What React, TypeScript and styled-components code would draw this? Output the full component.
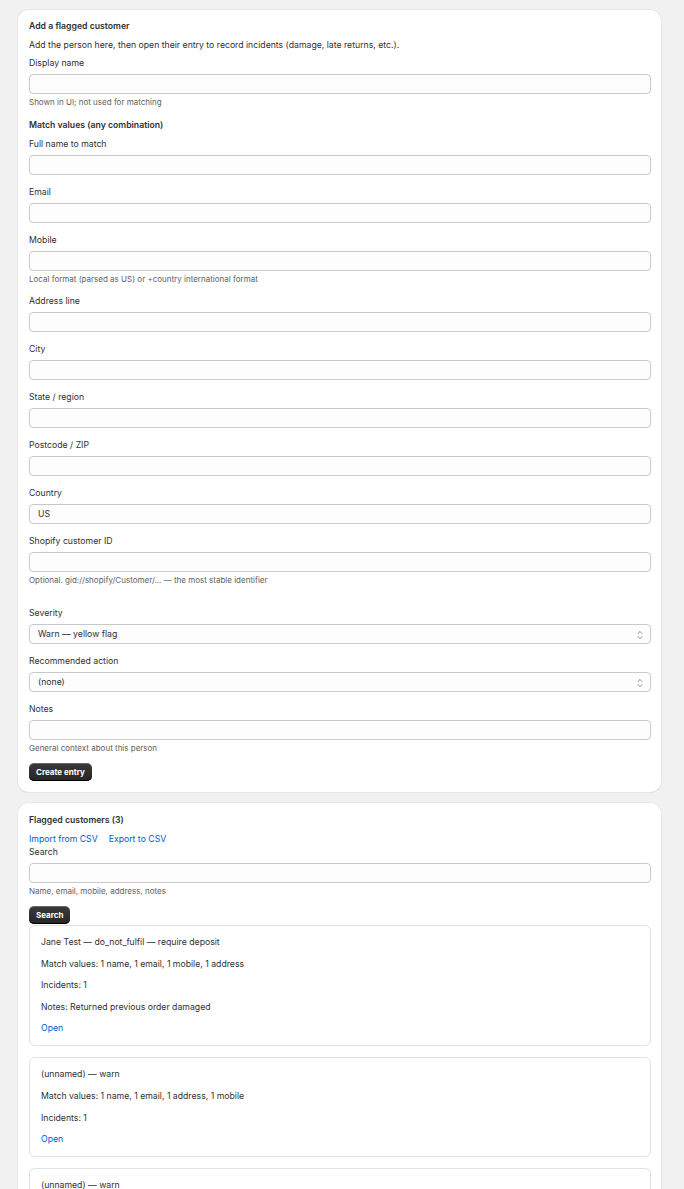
import styled, { createGlobalStyle } from 'styled-components';

const GlobalStyle = createGlobalStyle`
  html, body {
    margin: 0;
    padding: 0;
    background: #f1f1f1;
  }
  body {
    font-family: Inter, "Noto Sans", "Liberation Sans", sans-serif;
    color: #303030;
    font-size: 8.7px;
    line-height: 12px;
  }
`;

const Page = styled.div`
  display: flex;
  flex-direction: column;
  gap: 9px;
  padding: 9px 22px 0 17px;
`;

const Card = styled.section<{ $pt?: number }>`
  background: #fff;
  border-radius: 12px;
  padding: ${(p) => p.$pt ?? 11}px 11px 12px 12px;
  box-shadow: inset 0 0 0 1px #e6e6e6, inset 0 -1px 0 0 #d4d4d4;
  display: flex;
  flex-direction: column;
`;

const Title = styled.h2`
  margin: 0;
  font-size: 8.7px;
  line-height: 12px;
  font-weight: 600;
`;

const Text = styled.p<{ $mt?: number }>`
  margin: ${(p) => p.$mt ?? 0}px 0 0;
`;

const Heading = styled.h3<{ $mt?: number }>`
  margin: ${(p) => p.$mt ?? 0}px 0 0;
  font-size: 8.7px;
  line-height: 12px;
  font-weight: 600;
`;

const Field = styled.div<{ $mt?: number }>`
  display: flex;
  flex-direction: column;
  margin-top: ${(p) => p.$mt ?? 11}px;
`;

const Label = styled.label`
  line-height: 12px;
  margin-bottom: 5px;
`;

const Input = styled.div`
  height: 20px;
  box-sizing: border-box;
  border: 1px solid #c9c9c9;
  border-radius: 4px;
  background: #fdfdfd;
  display: flex;
  align-items: center;
  padding: 0 8px;
  position: relative;
`;

const Help = styled.span`
  color: #616161;
  font-size: 8px;
  line-height: 10px;
  margin-top: 3px;
`;

const Chevrons = styled.svg`
  position: absolute;
  right: 7px;
  top: 5px;
`;

const Button = styled.button<{ $mt?: number }>`
  align-self: flex-start;
  margin-top: ${(p) => p.$mt ?? 0}px;
  height: 18px;
  padding: 0 7px;
  border: none;
  border-radius: 5px;
  background: linear-gradient(#3a3a3a, #262626);
  box-shadow: inset 0 -1px 0 #000, inset 0 1px 0 rgba(255, 255, 255, 0.25);
  color: #fff;
  font-family: inherit;
  font-size: 8px;
  font-weight: 700;
  line-height: 18px;
`;

const Links = styled.div`
  display: flex;
  gap: 11px;
  margin-top: 7px;
  line-height: 12px;
`;

const Link = styled.a`
  color: #005bd3;
  text-decoration: none;
`;

const ListItem = styled.div<{ $mt?: number }>`
  margin-top: ${(p) => p.$mt ?? 11}px;
  border: 1px solid #e3e3e3;
  border-radius: 6px;
  padding: 10px 11px 11px;
  display: flex;
  flex-direction: column;
  gap: 9.6px;
`;

type FieldProps = {
  label: string;
  value?: string;
  help?: string;
  select?: boolean;
  mt?: number;
};

const SelectIcon = () => (
  <Chevrons width="6" height="10" viewBox="0 0 6 10" fill="none">
    <path d="M1 3.5 L3 1.5 L5 3.5" stroke="#8a8a8a" strokeWidth="1" strokeLinecap="round" strokeLinejoin="round" />
    <path d="M1 6.5 L3 8.5 L5 6.5" stroke="#8a8a8a" strokeWidth="1" strokeLinecap="round" strokeLinejoin="round" />
  </Chevrons>
);

const FormField = ({ label, value, help, select, mt }: FieldProps) => (
  <Field $mt={mt}>
    <Label>{label}</Label>
    <Input>
      {value}
      {select && <SelectIcon />}
    </Input>
    {help && <Help>{help}</Help>}
  </Field>
);

const entries = [
  {
    title: 'Jane Test — do_not_fulfil — require deposit',
    lines: ['Match values: 1 name, 1 email, 1 mobile, 1 address', 'Incidents: 1', 'Notes: Returned previous order damaged'],
  },
  {
    title: '(unnamed) — warn',
    lines: ['Match values: 1 name, 1 email, 1 address, 1 mobile', 'Incidents: 1'],
  },
  {
    title: '(unnamed) — warn',
    lines: ['Match values: 1 name, 1 email, 1 address', 'Incidents: 0'],
  },
];

const App = () => {
  return (
    <>
      <GlobalStyle />
      <Page>
        <Card>
          <Title>Add a flagged customer</Title>
          <Text $mt={7}>
            Add the person here, then open their entry to record incidents (damage, late returns, etc.).
          </Text>
          <FormField label="Display name" help="Shown in UI; not used for matching" mt={6} />
          <Heading $mt={12}>Match values (any combination)</Heading>
          <FormField label="Full name to match" mt={7} />
          <FormField label="Email" />
          <FormField label="Mobile" help="Local format (parsed as US) or +country international format" />
          <FormField label="Address line" />
          <FormField label="City" />
          <FormField label="State / region" />
          <FormField label="Postcode / ZIP" />
          <FormField label="Country" value="US" />
          <FormField label="Shopify customer ID" help="Optional. gid://shopify/Customer/... — the most stable identifier" />
          <FormField label="Severity" value="Warn — yellow flag" select mt={22} />
          <FormField label="Recommended action" value="(none)" select />
          <FormField label="Notes" help="General context about this person" />
          <Button $mt={10}>Create entry</Button>
        </Card>
        <Card $pt={12}>
          <Title>Flagged customers (3)</Title>
          <Links>
            <Link href="#">Import from CSV</Link>
            <Link href="#">Export to CSV</Link>
          </Links>
          <FormField label="Search" help="Name, email, mobile, address, notes" mt={1} />
          <Button $mt={10}>Search</Button>
          {entries.map((e, i) => (
            <ListItem key={i} $mt={i === 0 ? 1 : 11}>
              <Text>{e.title}</Text>
              {e.lines.map((l) => (
                <Text key={l}>{l}</Text>
              ))}
              <Link href="#">Open</Link>
            </ListItem>
          ))}
        </Card>
      </Page>
    </>
  );
};

export default App;
